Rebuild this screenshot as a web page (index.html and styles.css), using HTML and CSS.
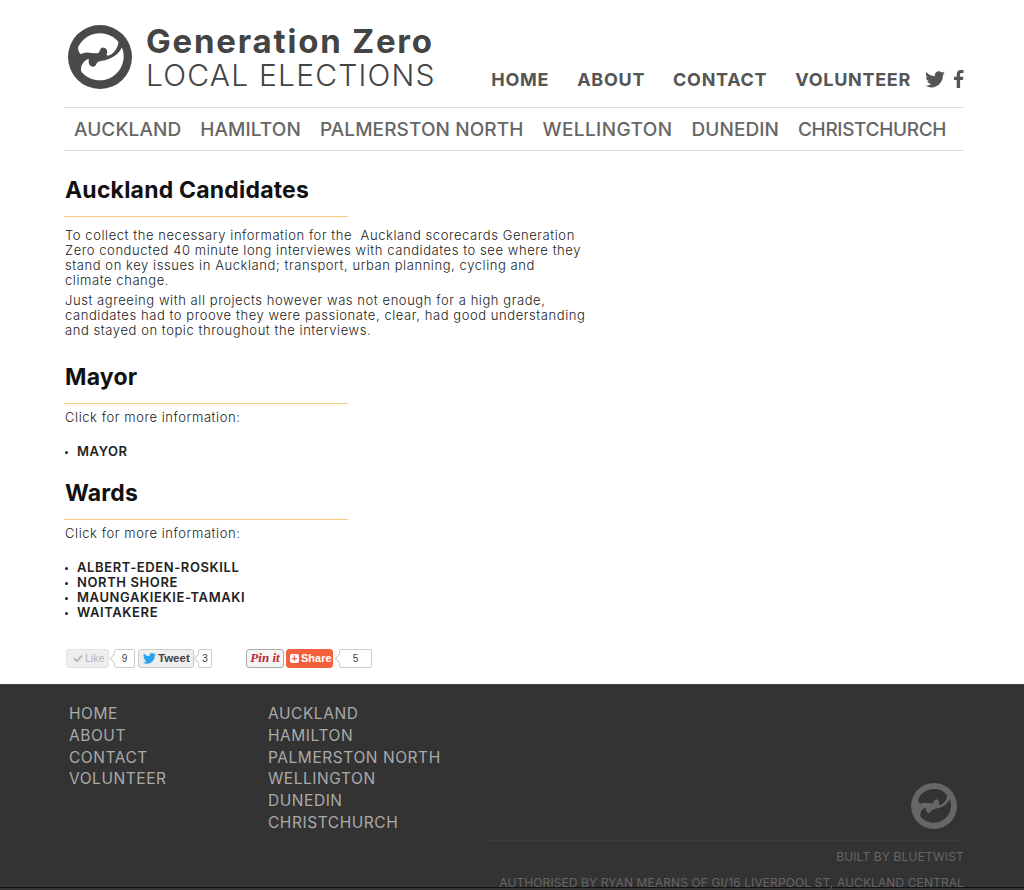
FILE: index.html
```html
<!DOCTYPE html>
<html lang="en">
<head>
    <meta charset="UTF-8">
    <title>Generation Zero - Local Elections</title>
    <link rel="stylesheet" href="styles.css">
</head>
<body>
    <svg class="sprites" width="0" height="0">
        <symbol id="koru" viewBox="0 0 64 64">
            <path fill-rule="evenodd" d="M32 0a32 32 0 1 0 0 64a32 32 0 0 0 0-64z
                M12.300 29C11 27 10 25 10 22.500A24 24 0 0 1 50.500 17C50 22 47 27 43 29.500C41 31 39.500 30.800 38.500 30C39.500 28 39.300 26.500 38.800 25C38 22.500 34.500 21.500 32.800 23.500C31.700 25 31.500 27 30.500 28C26 29 22 27 18 27.500C16 27.800 14 28.500 12.300 29z
                M54 22.500A24 24 0 0 1 13.500 47C12 42.500 14 38 17.500 35.500C19 34.500 20.500 34 21 34.500C20.300 37 20.800 39.500 22.500 40.800C24.500 42.300 27 41.800 28 39.700C28.500 38.500 29.500 37 31 36.500C35 35.500 39 35 43 33C47 31.200 51 28 54 22.500z"/>
        </symbol>
    </svg>

    <div class="wrap">
        <header class="top">
            <a class="brand" href="#">
                <svg class="brand-logo"><use href="#koru"/></svg>
                <span class="brand-text">
                    <span class="brand-name">Generation Zero</span>
                    <span class="brand-sub">LOCAL ELECTIONS</span>
                </span>
            </a>
            <nav class="main-nav">
                <a href="#">HOME</a>
                <a href="#">ABOUT</a>
                <a href="#">CONTACT</a>
                <a href="#">VOLUNTEER</a>
                <span class="social">
                    <svg class="icon-twitter" viewBox="0 0 24 20"><path d="M24 2.400c-.9.400-1.800.700-2.800.800c1-.600 1.800-1.600 2.200-2.700c-1 .6-2 1-3.100 1.200C19.300.700 18 0 16.600 0c-2.700 0-4.900 2.200-4.900 4.900c0 .4 0 .8.100 1.100C7.700 5.800 4.100 3.900 1.700.9c-.4.700-.7 1.600-.7 2.500c0 1.700.9 3.200 2.200 4.100c-.8 0-1.600-.2-2.200-.6v.1c0 2.400 1.700 4.400 3.900 4.800c-.4.100-.8.200-1.300.2c-.3 0-.6 0-.9-.1c.6 2 2.400 3.400 4.600 3.400c-1.700 1.300-3.800 2.100-6.100 2.100c-.4 0-.8 0-1.200-.1c2.200 1.400 4.800 2.200 7.500 2.200c9.100 0 14-7.500 14-14v-.6c1-.7 1.800-1.600 2.500-2.500z"/></svg>
                    <svg class="icon-facebook" viewBox="0 0 10 18"><path d="M9.500 0v3H7.700c-1.400 0-1.600.7-1.600 1.600v2.100h3.300l-.4 3.300H6.100v8H2.700v-8H0V6.700h2.700V4.300C2.700 1.500 4.400 0 6.900 0c1.200 0 2.200.1 2.600 0z"/></svg>
                </span>
            </nav>
        </header>

        <nav class="city-nav">
            <a href="#">AUCKLAND</a>
            <a href="#">HAMILTON</a>
            <a href="#">PALMERSTON NORTH</a>
            <a href="#">WELLINGTON</a>
            <a href="#">DUNEDIN</a>
            <a href="#">CHRISTCHURCH</a>
        </nav>

        <main class="content">
            <h1>Auckland Candidates</h1>
            <div class="intro">
                <p>To collect the necessary information for the&nbsp; Auckland scorecards Generation Zero conducted 40 minute long interviewes with candidates to see where they stand on key issues in Auckland; transport, urban planning, cycling and<br>climate change.</p>
                <p>Just agreeing with all projects however was not enough for a high grade, candidates had to proove they were passionate, clear, had good understanding and stayed on topic throughout the interviews.</p>
            </div>

            <h2>Mayor</h2>
            <p class="hint">Click for more information:</p>
            <ul>
                <li><a href="#">MAYOR</a></li>
            </ul>

            <h2>Wards</h2>
            <p class="hint">Click for more information:</p>
            <ul>
                <li><a href="#">ALBERT-EDEN-ROSKILL</a></li>
                <li><a href="#">NORTH SHORE</a></li>
                <li><a href="#">MAUNGAKIEKIE-TAMAKI</a></li>
                <li><a href="#">WAITAKERE</a></li>
            </ul>

            <div class="share">
                <span class="btn btn-like"><svg viewBox="0 0 12 10"><path d="M1 5.500l3.500 3.500L11 2" fill="none" stroke="#b5b5b5" stroke-width="2.400"/></svg>Like</span>
                <span class="count count-like">9</span>
                <span class="btn btn-tweet"><svg viewBox="0 0 24 20"><path fill="#2aa3ef" d="M24 2.400c-.9.400-1.800.700-2.800.800c1-.600 1.800-1.600 2.200-2.700c-1 .6-2 1-3.100 1.200C19.300.700 18 0 16.600 0c-2.700 0-4.900 2.200-4.900 4.900c0 .4 0 .8.100 1.100C7.700 5.800 4.100 3.900 1.700.9c-.4.700-.7 1.600-.7 2.500c0 1.700.9 3.200 2.200 4.100c-.8 0-1.600-.2-2.200-.6v.1c0 2.400 1.700 4.400 3.900 4.800c-.4.100-.8.200-1.300.2c-.3 0-.6 0-.9-.1c.6 2 2.400 3.400 4.600 3.400c-1.700 1.300-3.800 2.100-6.100 2.100c-.4 0-.8 0-1.200-.1c2.200 1.400 4.800 2.200 7.500 2.200c9.100 0 14-7.500 14-14v-.6c1-.7 1.800-1.600 2.500-2.500z"/></svg>Tweet</span>
                <span class="count count-tweet">3</span>
                <span class="btn btn-pin">Pin it</span>
                <span class="btn btn-plus"><span class="plus-box">+</span>Share</span>
                <span class="count count-plus">5</span>
            </div>
        </main>
    </div>

    <footer class="footer">
        <div class="footer-inner">
            <ul class="footer-col">
                <li><a href="#">HOME</a></li>
                <li><a href="#">ABOUT</a></li>
                <li><a href="#">CONTACT</a></li>
                <li><a href="#">VOLUNTEER</a></li>
            </ul>
            <ul class="footer-col">
                <li><a href="#">AUCKLAND</a></li>
                <li><a href="#">HAMILTON</a></li>
                <li><a href="#">PALMERSTON NORTH</a></li>
                <li><a href="#">WELLINGTON</a></li>
                <li><a href="#">DUNEDIN</a></li>
                <li><a href="#">CHRISTCHURCH</a></li>
            </ul>
            <div class="footer-right">
                <svg class="footer-logo"><use href="#koru"/></svg>
                <div class="built">BUILT BY BLUETWIST</div>
                <div class="authorised">AUTHORISED BY RYAN MEARNS OF GI/16 LIVERPOOL ST, AUCKLAND CENTRAL</div>
            </div>
        </div>
    </footer>
</body>
</html>
```
FILE: styles.css
```css
* {
    box-sizing: border-box;
}

html, body {
    height: 890px;
    overflow: hidden;
}

body {
    margin: 0;
    background: #fff;
    color: #333;
    font-family: "Inter", "Liberation Sans", sans-serif;
}

a {
    color: inherit;
    text-decoration: none;
}

.sprites {
    position: absolute;
}

.wrap {
    width: 900px;
    margin-left: 64px;
}

.top {
    display: flex;
    justify-content: space-between;
    height: 108px;
    border-bottom: 1px solid #ddd;
}

.brand {
    display: flex;
    align-items: flex-start;
    padding: 25px 0 0 4px;
    gap: 14px;
    color: #444;
}

.brand-logo {
    width: 64px;
    height: 64px;
    fill: #4a4a4a;
}

.brand-text {
    display: flex;
    flex-direction: column;
}

.brand-name {
    font-size: 33px;
    font-weight: 700;
    line-height: 34px;
    margin-top: -1px;
    letter-spacing: 1.8px;
}

.brand-sub {
    font-size: 30px;
    font-weight: 300;
    line-height: 34px;
    letter-spacing: 1.2px;
}

.main-nav {
    display: flex;
    align-items: center;
    height: 24px;
    margin-top: 67px;
    color: #555;
    font-size: 18px;
    font-weight: 700;
    letter-spacing: 0.7px;
}

.main-nav a {
    margin-left: 28px;
}

.social {
    display: flex;
    align-items: center;
    margin-left: 14px;
    gap: 9px;
}

.icon-twitter {
    width: 20px;
    height: 17px;
    fill: #555;
}

.icon-facebook {
    width: 10px;
    height: 18px;
    fill: #555;
}

.city-nav {
    display: flex;
    gap: 19px;
    height: 43px;
    align-items: center;
    padding-left: 10px;
    border-bottom: 1px solid #ddd;
    color: #666;
    font-size: 19px;
    font-weight: 500;
    letter-spacing: 0.1px;
}

.city-nav a:nth-child(4) {
    letter-spacing: 0.4px;
}

.city-nav a:last-child {
    letter-spacing: -0.35px;
}

.content {
    padding-top: 25px;
    width: 527px;
}

h1, h2 {
    margin: 0;
    width: 284px;
    color: #111;
    font-size: 23px;
    font-weight: 700;
    line-height: 28px;
    letter-spacing: 0.2px;
    text-indent: 1px;
    white-space: nowrap;
    border-bottom: 1px solid #fbca7f;
}

h1 {
    padding-bottom: 12px;
    margin-bottom: 11px;
}

h2 {
    padding-bottom: 12px;
    margin-top: 20px;
    margin-bottom: 6px;
}

.intro {
    margin-bottom: 25px;
}

p {
    margin: 0 0 5px;
    padding-left: 1px;
    font-size: 13px;
    font-weight: 300;
    line-height: 15px;
    letter-spacing: 0.57px;
    color: #222;
}

.hint {
    margin-bottom: 19px;
}

ul {
    margin: 0;
    padding: 0;
    list-style: none;
}

.content li {
    position: relative;
    padding-left: 13px;
    font-size: 13px;
    font-weight: 600;
    line-height: 15px;
    letter-spacing: 0.6px;
    color: #222;
}

.content li::before {
    content: "";
    position: absolute;
    left: 1px;
    top: 7px;
    width: 3px;
    height: 3px;
    border-radius: 50%;
    background: #222;
}

.share {
    display: flex;
    align-items: center;
    height: 20px;
    margin-top: 28px;
    padding-left: 2px;
    font-family: "Liberation Sans", sans-serif;
    font-size: 11px;
}

.btn {
    display: flex;
    align-items: center;
    height: 19px;
    border-radius: 3px;
    border: 1px solid #ccc;
    background: #eee;
    font-weight: 700;
}

.btn-like {
    width: 43px;
    padding-left: 6px;
    gap: 2px;
    color: #b5b5b5;
    font-size: 10.500px;
    font-weight: 400;
    border-color: #e2e2e2;
}

.btn-like svg {
    width: 10px;
    height: 8px;
}

.btn-tweet {
    width: 56px;
    padding-left: 4px;
    gap: 2px;
    color: #444;
    font-size: 11.500px;
    margin-left: 3px;
}

.btn-tweet svg {
    width: 13px;
    height: 11px;
}

.btn-pin {
    width: 38px;
    justify-content: center;
    margin-left: 34px;
    color: #bd2b32;
    background: #f4f4f4;
    border-color: #aaa;
    font-family: "Liberation Serif", serif;
    font-style: italic;
    font-size: 13px;
}

.btn-plus {
    width: 47px;
    margin-left: 2px;
    padding-left: 3px;
    gap: 2px;
    color: #fff;
    background: #f4603c;
    border-color: #f4603c;
}

.plus-box {
    width: 9px;
    height: 9px;
    border-radius: 2px;
    background: #fff;
    color: #f4603c;
    font-size: 10px;
    line-height: 9px;
    text-align: center;
}

.count {
    position: relative;
    height: 19px;
    margin-left: 5px;
    border: 1px solid #ccc;
    border-radius: 2px;
    background: #fff;
    color: #444;
    font-size: 10px;
    line-height: 17px;
    text-align: center;
}

.count::before {
    content: "";
    position: absolute;
    left: -4px;
    top: 5px;
    width: 6px;
    height: 6px;
    border-left: 1px solid #ccc;
    border-bottom: 1px solid #ccc;
    background: #fff;
    transform: rotate(45deg);
}

.count-like {
    width: 21px;
}

.count-tweet {
    width: 14px;
    margin-left: 4px;
}

.count-plus {
    width: 33px;
    margin-left: 6px;
}

.footer {
    height: 204px;
    margin-top: 16px;
    background: #333;
    border-top: 1px solid #444;
    border-bottom: 1px solid #111;
    box-shadow: 0 3px 0 #333;
    color: #aaa;
}

.footer-inner {
    display: flex;
    width: 900px;
    margin-left: 64px;
}

.footer-col {
    padding: 18px 0 0 5px;
    width: 199px;
    font-size: 15.500px;
    line-height: 21.800px;
    letter-spacing: 0.55px;
}

.footer-right {
    display: flex;
    flex-direction: column;
    align-items: flex-end;
    flex: 1;
    padding-top: 98px;
    color: #666;
    font-size: 12px;
}

.footer-logo {
    width: 46px;
    height: 46px;
    fill: #666;
    margin-right: 7px;
}

.built {
    width: 474px;
    margin-top: 11px;
    padding-top: 8px;
    text-align: right;
    letter-spacing: 0.15px;
    border-top: 1px dotted #444;
}

.authorised {
    margin-top: 13px;
    line-height: 12px;
    white-space: nowrap;
    letter-spacing: 0.1px;
}
```
